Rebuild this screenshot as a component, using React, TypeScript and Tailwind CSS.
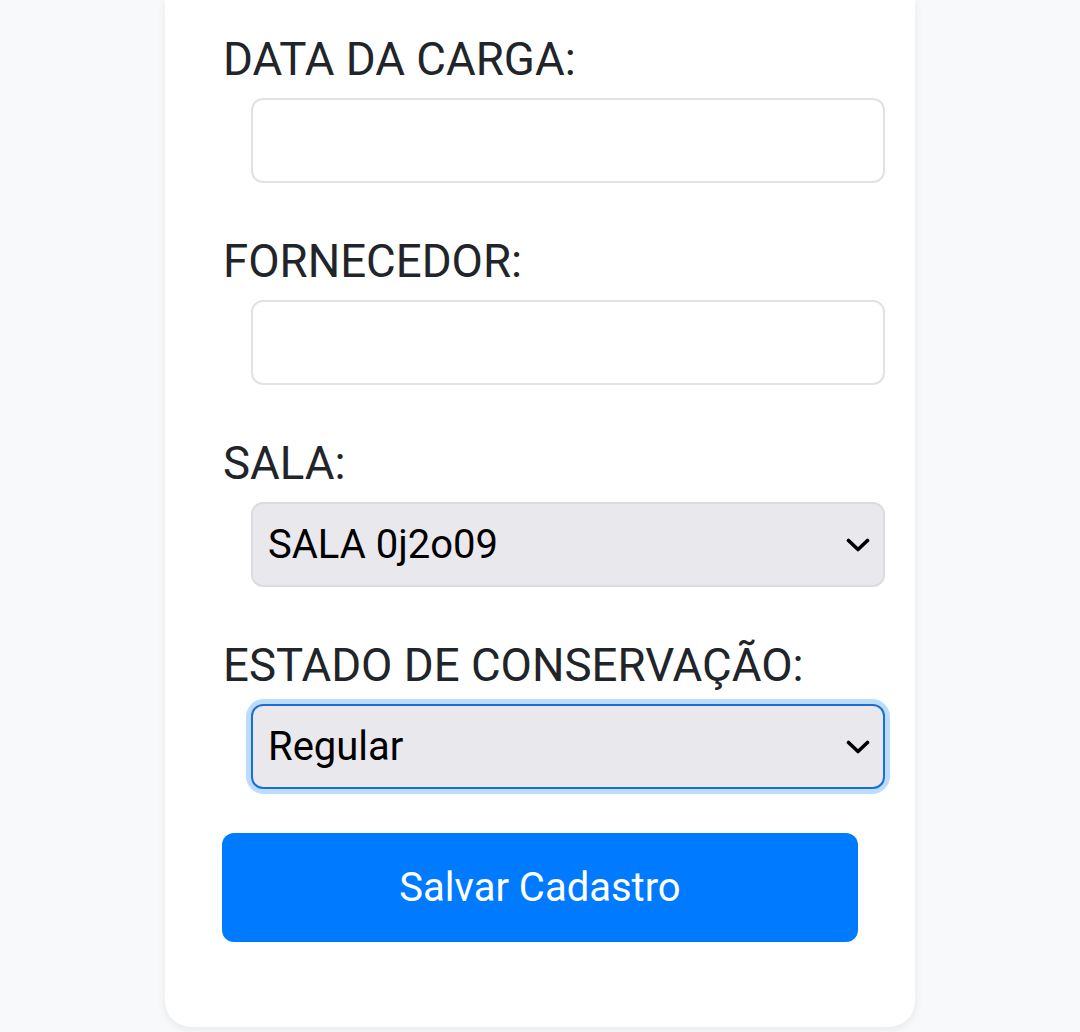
import React from "react";

function Chevron() {
  return (
    <svg width="24" height="16" viewBox="0 0 24 16" className="pointer-events-none absolute right-[15px] top-1/2 -translate-y-1/2">
      <path d="M2.5 3.5 L12 12.5 L21.5 3.5" fill="none" stroke="#000" strokeWidth="3.6" strokeLinecap="round" strokeLinejoin="round" />
    </svg>
  );
}

function Label({ children }: { children: React.ReactNode }) {
  return <div className="text-[45.6px] leading-[54px] text-[#212529]">{children}</div>;
}

export default function App() {
  return (
    <div className="min-h-[1032px] bg-[#f8f9fa] flex justify-center" style={{ fontFamily: "Roboto, 'Noto Sans', sans-serif" }}>
      <div className="w-[750px] h-[1027px] bg-white rounded-b-[26px] shadow-[0_2px_10px_rgba(0,0,0,0.08)] pl-[58px] pr-[30px] pt-[33px] flex flex-col">
        <Label>DATA DA CARGA:</Label>
        <input className="mt-[11px] ml-[28px] w-[634px] h-[85px] border-2 border-[#dfe2e6] rounded-[12px] bg-white outline-none" />
        <div className="mt-[52px]"><Label>FORNECEDOR:</Label></div>
        <input className="mt-[11px] ml-[28px] w-[634px] h-[85px] border-2 border-[#dfe2e6] rounded-[12px] bg-white outline-none" />
        <div className="mt-[52px]"><Label>SALA:</Label></div>
        <div className="relative mt-[11px] ml-[28px] w-[634px] h-[85px]">
          <select className="appearance-none w-full h-full border-2 border-[#dcdce0] rounded-[12px] bg-[#e9e9ed] pl-[15px] text-[40px] text-black outline-none" defaultValue="a">
            <option value="a">SALA 0j2o09</option>
          </select>
          <Chevron />
        </div>
        <div className="mt-[52px]"><Label>ESTADO DE CONSERVAÇÃO:</Label></div>
        <div className="relative mt-[11px] ml-[28px] w-[634px] h-[85px] rounded-[13px] shadow-[0_0_0_5px_#bcdcfb]">
          <select className="appearance-none w-full h-full border-2 border-[#1a6fd4] rounded-[12px] bg-[#e9e9ed] pl-[15px] text-[40px] text-black outline-none" defaultValue="r">
            <option value="r">Regular</option>
          </select>
          <Chevron />
        </div>
        <button className="mt-[44px] -ml-px w-[636px] h-[109px] rounded-[12px] bg-[#007bff] text-white text-[40px]">Salvar Cadastro</button>
      </div>
    </div>
  );
}
